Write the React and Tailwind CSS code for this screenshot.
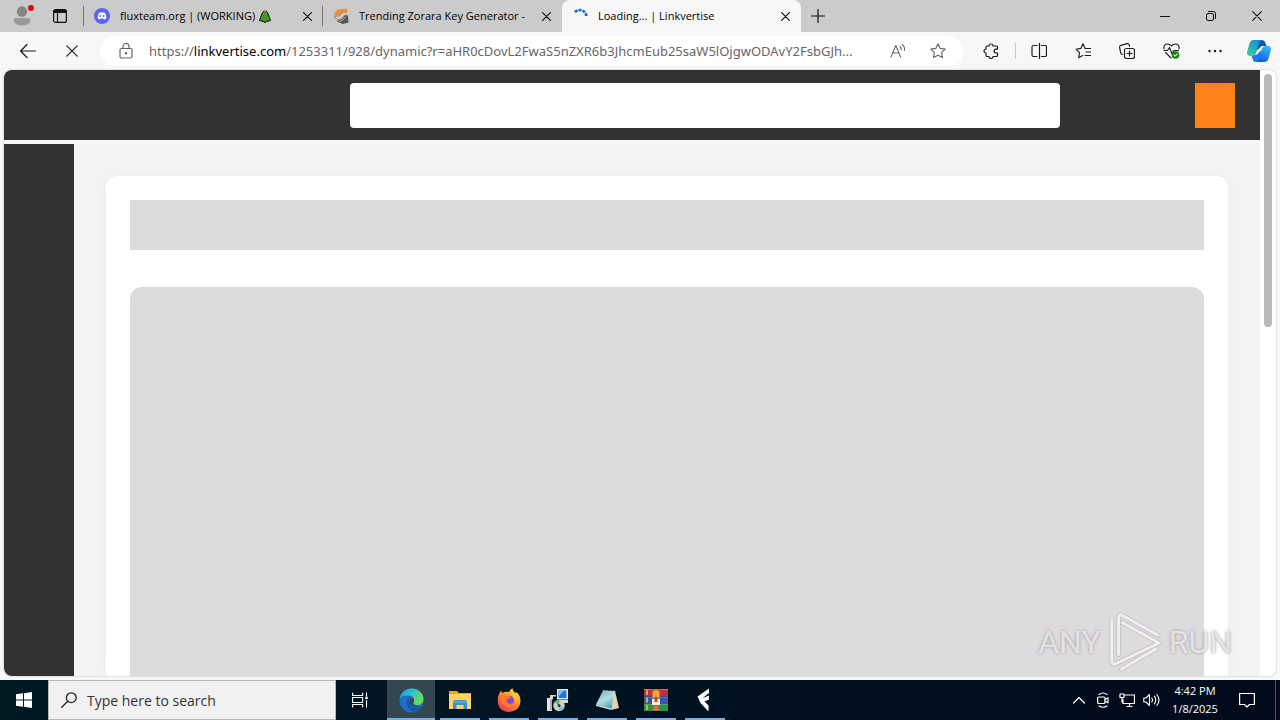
const ui = "font-['Open_Sans','Noto_Sans',sans-serif]";

function Icon({ className = "w-4 h-4", box = "0 0 16 16", children, sw = 1 }) {
  return (
    <svg className={className} viewBox={box} fill="none" stroke="currentColor" strokeWidth={sw} strokeLinecap="round" strokeLinejoin="round" aria-hidden="true">
      {children}
    </svg>
  );
}

function Cross({ className = "w-[9px] h-[9px]", sw = 1.2 }) {
  return (
    <Icon className={className} box="0 0 9 9" sw={sw}>
      <path d="M.6.6l7.8 7.8M8.4.6L.6 8.4" />
    </Icon>
  );
}

function Discord() {
  return (
    <svg className="w-4 h-4" viewBox="0 0 16 16" aria-hidden="true">
      <circle cx="8" cy="8" r="8" fill="#5865f2" />
      <path d="M5.2 4.8Q8 3.9 10.8 4.8Q12.5 7.3 12.4 10.2Q11.3 11.1 10 11.4L9.4 10.5H6.6L6 11.4Q4.7 11.1 3.6 10.2Q3.5 7.3 5.2 4.8Z" fill="#fff" />
      <circle cx="6.3" cy="8.1" r="1" fill="#5865f2" />
      <circle cx="9.7" cy="8.1" r="1" fill="#5865f2" />
    </svg>
  );
}

function Zorara() {
  return (
    <svg className="w-4 h-4" viewBox="0 0 16 16" aria-hidden="true">
      <path d="M1 5L5 1.500 13.500.5 14.500 4 9 7 3 8.500z" fill="#f58a32" />
      <path d="M.5 7l4 1L9 4l5 .5-5 5-3 3-5-2z" fill="#a89c94" />
      <path d="M3.500 13L9 11l3-4 3 .5.5 7-6 1.500z" fill="#57534f" />
      <path d="M3 9.500l3 .5 6-5" stroke="#f3e4d8" strokeWidth="1.200" fill="none" />
      <path d="M6 13.500l4-1.500 3-3.500" stroke="#c8c2bd" strokeWidth=".8" fill="none" />
    </svg>
  );
}

function Spinner() {
  return (
    <svg className="w-4 h-4" viewBox="0 0 16 16" fill="none" strokeWidth="2.6" aria-hidden="true">
      <path d="M3 4.2A6.500 6.500 0 0 1 14.300 8" stroke="#1668b0" strokeDasharray="3 1" />
    </svg>
  );
}

function Tree() {
  return (
    <svg className="w-3 h-3.5 shrink-0" viewBox="0 0 12 14" role="img" aria-label="Christmas tree">
      <path d="M6 1L8.500 3.500 9.500 6 10.500 8.500 11.500 11.500 6 13 .5 11.500 1.500 8.500 2.500 6 3.500 3.500z" fill="#35a028" stroke="#111" strokeWidth="1" />
      <path d="M4.8 12h2.4v2H4.8z" fill="#704020" />
      <circle cx="6" cy="1.3" r="1" fill="#e7b72c" />
      <path d="M5 5h1v1H5zM7 8h1v1H7zM4 9h1v1H4z" fill="#e44b35" />
    </svg>
  );
}

function Tab({ icon, title, extra, active, divider }) {
  return (
    <div className={"relative flex h-full w-[239px] items-center pl-2.5 pr-[11px] " + (active ? "rounded-t-lg bg-[#f7f7f7]" : "")}>
      <button role="tab" aria-selected={active} className="flex min-w-0 flex-1 items-center gap-2.5 text-left">
        <span className="shrink-0">{icon}</span>
        <span className="overflow-hidden whitespace-nowrap text-[11px] leading-4 text-black">{title}</span>
        {extra && <span className="-ml-1.5">{extra}</span>}
      </button>
      <button aria-label={"Close " + title} className="ml-3"><Cross /></button>
      {divider && <span className="absolute right-0 top-1.5 h-5 w-px bg-[#777]" />}
    </div>
  );
}

function TabStrip() {
  return (
    <header className="flex h-8 shrink-0 items-stretch bg-[#cbcbcb] text-[#111]">
      <button aria-label="Profile" className="relative flex w-11 items-center justify-center">
        <svg className="w-5 h-5" viewBox="0 0 20 20" aria-hidden="true">
          <circle cx="10" cy="5.5" r="5.2" fill="#858585" />
          <path d="M1.500 14.500Q1.500 12 4 12H16Q18.500 12 18.500 14.500Q17 19.500 10 19.500Q3 19.500 1.500 14.500Z" fill="#999" />
        </svg>
        <span className="absolute left-7 top-[5px] h-1.5 w-1.5 rounded-full bg-[#e3000b]" />
      </button>
      <button aria-label="Tab actions" className="flex w-8 items-center justify-center">
        <Icon className="w-3.5 h-3.5" box="0 0 14 14" sw={1.2}>
          <rect x=".6" y=".6" width="12.800" height="12.800" rx="2" />
          <path d="M1 2.400h12" strokeWidth="3" />
          <path d="M4.500 4v9" />
        </Icon>
      </button>
      <div className="flex w-2 items-center justify-end"><span className="h-5 w-px bg-[#777]" /></div>
      <div role="tablist" aria-label="Tabs" className="flex">
        <Tab icon={<Discord />} title="fluxteam.org | (WORKING)" extra={<Tree />} divider />
        <Tab icon={<Zorara />} title="Trending Zorara Key Generator -" />
        <Tab icon={<Spinner />} title="Loading... | Linkvertise" active />
      </div>
      <button aria-label="New tab" className="flex w-[34px] items-center justify-center">
        <Icon className="w-3.5 h-3.5" box="0 0 14 14" sw={1.2}><path d="M7 .5v13M.5 7h13" /></Icon>
      </button>
      <div className="ml-auto flex">
        <button aria-label="Minimize" className="flex w-[46px] items-center justify-center">
          <Icon className="w-2.5 h-2.5" box="0 0 10 10"><path d="M0 5.500h10" /></Icon>
        </button>
        <button aria-label="Restore" className="flex w-[46px] items-center justify-center">
          <Icon className="w-2.5 h-2.5" box="0 0 10 10">
            <rect x=".5" y="2.500" width="7" height="7" rx="1.500" />
            <path d="M2.500.5H7.500Q9.500.5 9.500 2.500V7.500" />
          </Icon>
        </button>
        <button aria-label="Close window" className="flex w-[46px] items-center justify-center"><Cross className="w-2.5 h-2.5" sw={1} /></button>
      </div>
    </header>
  );
}

function ToolButton({ label, children }) {
  return <button aria-label={label} className="flex h-8 w-11 shrink-0 items-center justify-center">{children}</button>;
}

function Toolbar() {
  return (
    <div className="flex h-[38px] shrink-0 items-center bg-[#f7f7f7] pl-1.5 text-[#1a1a1a]">
      <ToolButton label="Back">
        <Icon sw={1.200}><path d="M15.500 8H.8M7 1.500L.6 8 7 14.500" /></Icon>
      </ToolButton>
      <ToolButton label="Stop"><Cross className="w-3 h-3" sw={0.900} /></ToolButton>
      <form className="mx-1.5 flex h-[30px] min-w-0 flex-1 items-center rounded-full bg-white pl-[18px] text-[#666]">
        <button type="button" aria-label="Site information" className="mr-[15px]">
          <Icon sw={1.200}>
            <rect x="2" y="5.500" width="12" height="9.500" rx="1.500" />
            <path d="M5 5.500V3.500a3 3 0 0 1 6 0v2" />
            <circle cx="8" cy="10.300" r=".6" fill="currentColor" />
          </Icon>
        </button>
        <p aria-label="Address" className="min-w-0 flex-1 overflow-hidden whitespace-nowrap font-['Noto_Sans',sans-serif] text-[13px] leading-5">
          https://<span className="text-black">linkvertise.com</span>/1253311/928/dynamic?r=aHR0cDovL2FwaS5nZXR6b3JhcmEub25saW5lOjgwODAvY2FsbGJh...
        </p>
        <button type="button" aria-label="Read aloud" className="flex w-10 items-center justify-center">
          <Icon className="w-4 h-4" sw={1.100}>
            <path d="M1 14L5.800 2.500 10.600 14M2.700 10h6.200" />
            <path d="M10 3.500q1.500 1.500 1.200 3.500M12.200 1.500q3 2.500 2.200 6" />
          </Icon>
        </button>
        <button type="button" aria-label="Add to favorites" className="mr-[5px] flex w-10 items-center justify-center">
          <Icon sw={1.100}><path d="M8 .8l2.200 4.600 5 .7-3.600 3.500.9 5L8 12.200l-4.500 2.400.9-5L.8 6.100l5-.7z" /></Icon>
        </button>
      </form>
      <ToolButton label="Extensions">
        <Icon sw={1.200}>
          <path d="M4 3H6a2 2 0 0 1 4 0H13.500Q14.500 3 14.500 4V6.200H13a1.900 1.900 0 0 0 0 3.800H14.500V12.500Q14.500 13.500 13.500 13.500H10a2 2 0 0 1-4 0H4Q3 13.500 3 12.500V10a2 2 0 0 1 0-4V4Q3 3 4 3z" />
        </Icon>
      </ToolButton>
      <div className="flex w-1 justify-center"><span className="h-4 w-px bg-[#c9c9c9]" /></div>
      <ToolButton label="Split screen">
        <Icon sw={1.200}><path d="M6 2.500H2.500Q1 2.500 1 4v8Q1 13.500 2.500 13.500H6M10.500 2.500h3.500Q15.500 2.500 15.500 4v8q0 1.500-1.500 1.500H10.500M8.500.5v15" /></Icon>
      </ToolButton>
      <ToolButton label="Favorites">
        <Icon sw={1.100}><path d="M10 5.400L8 .8 5.800 5.400 1 6.200 4.500 9.700l-.8 5 4-2.100M10 5.500h6M11 9h5M10 12.500h6" /></Icon>
      </ToolButton>
      <ToolButton label="Collections">
        <Icon sw={1.200}>
          <rect x="5.500" y="5.500" width="10" height="10" rx="2" />
          <path d="M10.500 8v5M8 10.500h5M3.400 11.500Q2 11 1.700 9.800L.6 4.400Q.4 2.800 2 2.300L8 .7q1.700-.4 2.300 1.200l.3 1.400" />
        </Icon>
      </ToolButton>
      <ToolButton label="Browser essentials">
        <Icon className="w-[17px] h-4" box="0 0 17 16" sw={1.100}>
          <path d="M1 6Q.3 2.500 3 1.300 6 .2 8.500 3 11 .2 14 1.300 16.700 2.500 16 6M1 7.500h3.500L6.500 4.500l2.300 6L10.800 7.500H15.500M2.500 9.500L8 15" />
          <circle cx="12.500" cy="12" r="3.800" fill="#168015" stroke="none" />
          <path d="M11 12l1.100 1.200L14.200 11" stroke="#d6ffd6" />
        </Icon>
      </ToolButton>
      <ToolButton label="Settings and more">
        <svg className="w-3.5 h-1" viewBox="0 0 14 4" fill="currentColor" aria-hidden="true"><circle cx="1.500" cy="2" r="1.200" /><circle cx="7" cy="2" r="1.200" /><circle cx="12.500" cy="2" r="1.200" /></svg>
      </ToolButton>
      <button aria-label="Copilot" className="flex w-[43px] items-center justify-center">
        <svg className="w-6 h-6" viewBox="0 0 24 24" aria-hidden="true">
          <defs>
            <linearGradient id="cpA" x1=".8" y1="0" x2=".3" y2="1"><stop offset="0" stopColor="#1688d8" /><stop offset=".45" stopColor="#1fa8c8" /><stop offset="1" stopColor="#42c98a" /></linearGradient>
            <linearGradient id="cpB" x1=".7" y1="0" x2=".3" y2="1"><stop offset="0" stopColor="#35b9f5" /><stop offset="1" stopColor="#1558e6" /></linearGradient>
          </defs>
          <path d="M11 1h4q2.500 0 3.300 2.500L19.500 7H16q-2.500 0-3.200 2L9 12z" fill="#1257a8" />
          <path d="M13 23H9q-2.500 0-3.300-2.500L4.500 16H8q2.500 0 3.200-2L15 11z" fill="#1b79e8" />
          <path d="M6.500 1H15Q13 1.500 12.200 4L9.300 13.500Q8.300 17 5 17H3Q-.9 17 .2 12.500L2.500 4.500Q3.500 1 6.500 1z" fill="url(#cpA)" />
          <path d="M17.500 23H9q2-.5 2.800-3L14.700 10.500Q15.700 7 19 7h2q3.900 0 2.800 4.500L21.500 19.500Q20.500 23 17.500 23z" fill="url(#cpB)" />
        </svg>
      </button>
    </div>
  );
}

function Watermark() {
  return (
    <div aria-label="ANY RUN" className="absolute bottom-[46px] right-12 flex items-center font-['Roboto',sans-serif] text-[32px] leading-[64px] text-white/70 [text-shadow:0_0_3px_#8f8d8f]">
      <span>ANY</span>
      <svg className="mx-1.5 h-16 w-[56px]" viewBox="0 0 58 64" fill="none" strokeLinecap="round" strokeLinejoin="round" aria-hidden="true">
        <g stroke="#b7b4b7" strokeOpacity=".6" strokeWidth="5">
          <path d="M12 45V8Q12 2 17 5L53 25M5 9V51Q5 57 10 54L54 33L16 12M15 60L51 39" />
        </g>
        <g stroke="#f1eff1" strokeWidth="3">
          <path d="M12 45V8Q12 2 17 5L53 25M5 9V51Q5 57 10 54L54 33L16 12M15 60L51 39" />
        </g>
      </svg>
      <span>RUN</span>
    </div>
  );
}

function Page() {
  return (
    <div className="flex min-h-0 flex-1 bg-[#f7f7f7] px-1 pb-1">
      <div className="flex min-w-0 flex-1 overflow-hidden rounded-lg bg-white shadow-[0_0_2px_#aaa]">
        <main className="flex min-w-0 flex-1 flex-col bg-[#f4f4f4]">
          <div className="flex h-[70px] shrink-0 items-center bg-[#323232] pl-[346px] pr-[25px]">
            <input aria-label="Search" className="h-[45px] min-w-0 flex-1 rounded bg-white px-3 outline-none" />
            <button aria-label="Menu" className="ml-[135px] h-[45px] w-10 shrink-0 bg-[#ff8216]" />
          </div>
          <div className="flex min-h-0 flex-1">
            <nav aria-label="Sidebar" className="mt-1 w-[70px] shrink-0 bg-[#323232]" />
            <section className="mx-8 mt-9 flex min-w-0 flex-1 flex-col gap-[37px] rounded-t-xl bg-white px-6 pt-6 shadow-[0_0_20px_rgba(0,0,0,0.04)]">
              <div className="h-[50px] shrink-0 bg-[#dedbdf]" />
              <div className="flex-1 rounded-t-xl bg-[#dedbdf]" />
            </section>
          </div>
        </main>
        <div className="flex w-4 shrink-0 justify-center bg-white py-1">
          <div className="h-[253px] w-2 rounded-full bg-[#b9b9bd]" />
        </div>
      </div>
    </div>
  );
}

function EdgeLogo() {
  return (
    <svg className="h-[25px] w-[25px]" viewBox="0 0 25 25" aria-hidden="true">
      <defs>
        <linearGradient id="edA" x1="0" y1="0" x2="1" y2=".4"><stop offset="0" stopColor="#2494da" /><stop offset=".5" stopColor="#2ac0cf" /><stop offset="1" stopColor="#67df55" /></linearGradient>
      </defs>
      <circle cx="12.500" cy="12.500" r="12" fill="#1b6fc4" />
      <path d="M.6 11.500C2 4 7 .5 12.500.5 19 .5 24.500 5 24.500 11c0 3.500-2.500 6-6 6-3 0-5-1-4.300-2 2-2.800.6-7-4-7.500C5.500 7 2 8.500.6 11.500z" fill="url(#edA)" />
      <path d="M9 10c-3 5.500 0 14 8 14 3-.8 5-2.500 6.400-5C17 22 10.500 18.500 11 14z" fill="#1656a5" />
      <path d="M14.200 15c2-2.800.3-5.500-2.200-5.300-2 1-2 4.500.5 7.300 3 3 8 3 11.200 1-3 1.200-9.500 0-9.500-3z" fill="#36474d" />
    </svg>
  );
}

function Folder() {
  return (
    <svg className="h-[22px] w-6" viewBox="0 0 24 22" aria-hidden="true">
      <path d="M1 2h8l2 2h12v16H1z" fill="#e9a32b" />
      <path d="M1 5h22v15H1z" fill="#fbd36a" />
      <path d="M5 20v-7q0-2 2-2h10q2 0 2 2v7h-3.500v-4h-7v4z" fill="#398fd0" />
      <path d="M5 13h14" stroke="#6dbbe9" strokeWidth="1" />
    </svg>
  );
}

function Firefox() {
  return (
    <svg className="h-6 w-6" viewBox="0 0 24 24" aria-hidden="true">
      <defs>
        <linearGradient id="ffA" x1=".9" y1="0" x2=".2" y2="1"><stop offset="0" stopColor="#fff04a" /><stop offset=".45" stopColor="#ff9624" /><stop offset="1" stopColor="#f02a60" /></linearGradient>
      </defs>
      <path d="M2.500 5q1-2 2-2.500 0 2 1 2.500 2-1.500 4-1.300L12 4Q13.500 1 15.500.3 15.500 2.800 18 4.500 19 5.500 19.500 4q4.300 4 4 9.500Q22.500 23.500 12 24 1 23.500.7 12.500.5 8 2.500 5z" fill="url(#ffA)" />
      <circle cx="12" cy="12.800" r="5" fill="#8046d8" />
      <path d="M4 9q4-3 7-1l3 1q-1 2-4 2-1.500 3 1.500 4.500 3 1 5-1-1 5-6 4.500Q4 18 4 9z" fill="#ff7826" />
      <path d="M15 7q4 2 3.500 7 2-3 1-7-2-2-4-4-1 2-.5 4z" fill="#ffc834" />
    </svg>
  );
}

function Installer() {
  return (
    <svg className="h-6 w-6" viewBox="0 0 24 24" aria-hidden="true">
      <path d="M11 1h11v10.500H11z" fill="#e4ecf2" /><path d="M12.500 2.500h8v7.500h-8z" fill="#1a78dc" /><path d="M13 3h4.500L13 8z" fill="#70c8ff" />
      <path d="M14 12h8v3H12z" fill="#d8dcdf" />
      <path d="M4 7h6v1.500H7v3H4z" fill="#d4d4d4" /><path d="M1 10h5v13H1z" fill="#e8e4ea" /><path d="M4 11h2v11H4z" fill="#b5a9b5" />
      <circle cx="13" cy="17.500" r="5.700" fill="#cbd3cb" /><path d="M13 17.500L8.500 14q2-2.500 5-2.200z" fill="#6eac64" /><path d="M13 17.500l5 2.500q-2 3.200-5 3z" fill="#8dbfd0" />
      <circle cx="13" cy="17.500" r="1.500" fill="#26414a" />
    </svg>
  );
}

function Notebook() {
  return (
    <svg className="h-6 w-6" viewBox="0 0 24 24" aria-hidden="true">
      <defs><linearGradient id="nbA" x1=".2" y1="0" x2=".7" y2="1"><stop offset="0" stopColor="#6fb0ba" /><stop offset=".5" stopColor="#b5dfe2" /><stop offset="1" stopColor="#4b9dac" /></linearGradient></defs>
      <path d="M18 3L20 3 24 20 16 22z" fill="#e0d3b4" />
      <path d="M8 2.500L19 3 16.500 21 1 16.500z" fill="url(#nbA)" />
      <path d="M1 16.500l15.500 4v1.500L1 18z" fill="#c8e3e5" />
      <path d="M8.500 2.500h1M11.500 2.500h1M14.500 3h1M17.500 3h1" stroke="#c9d4d5" />
    </svg>
  );
}

function Archive() {
  return (
    <svg className="h-6 w-6" viewBox="0 0 24 24" aria-hidden="true">
      <path d="M0 1h24v7H0z" fill="#c02f38" /><path d="M0 8.500h24v6.500H0z" fill="#3653bc" /><path d="M0 15.500h24v7.500H0z" fill="#289448" />
      <path d="M0 1.500h24M0 9h24M0 16h24" stroke="#fff" strokeOpacity=".3" />
      <path d="M3 2v5M3 9.500v5M3 17v5" stroke="#d9b94a" strokeWidth="1.800" />
      <path d="M8.500 1h7v22h-7z" fill="#a8602a" /><path d="M8.500 4Q12-1 15.500 4v6h-7z" fill="#f0a23f" />
      <path d="M8 11h8v6H8z" fill="#f2eee1" /><path d="M10.500 9h3v5h-3z" fill="#a4581f" /><path d="M9.500 19h5M9.500 21.500h5" stroke="#f3a252" />
    </svg>
  );
}

function FluxMark() {
  return (
    <svg className="h-6 w-6" viewBox="0 0 24 24" fill="#fff" aria-hidden="true">
      <path d="M16 .5L4.500 8.500 7.500 15 15.500 23.500V17.500L11.500 13.500 16 11.500V7.500L9.500 10.300 16 5z" />
    </svg>
  );
}

const apps = [
  ["Microsoft Edge", EdgeLogo],
  ["File Explorer", Folder],
  ["Firefox", Firefox],
  ["Installer", Installer],
  ["Notepad", Notebook],
  ["WinRAR", Archive],
  ["Flux", FluxMark],
];

function Taskbar() {
  return (
    <footer className="flex h-10 shrink-0 items-stretch bg-linear-to-r from-[#001a24] to-[#000a1b] text-white">
      <button aria-label="Start" className="flex w-12 items-center justify-center">
        <svg className="h-4 w-4" viewBox="0 0 16 16" fill="#fff" aria-hidden="true"><path d="M0 2.300L7 1.300V7.500H0zM8 1.200L16 0v7.500H8zM0 8.500h7v6.200L0 13.700zM8 8.500h8V16L8 14.800z" /></svg>
      </button>
      <label className="flex w-72 items-center gap-2.5 border border-[#b8b8b8] bg-[#f1f1f1] pl-3 text-[#222]">
        <Icon className="h-4 w-4 shrink-0" sw={1.300}><circle cx="10.300" cy="5.700" r="4.900" /><path d="M6.800 9.200L.7 15.300" /></Icon>
        <input aria-label="Search Windows" placeholder="Type here to search" className="min-w-0 flex-1 bg-transparent text-[14px] outline-none placeholder:text-[#333]" />
      </label>
      <button aria-label="Task view" className="mr-[3px] flex w-12 items-center justify-center">
        <Icon className="h-4 w-4" sw={1.100}>
          <path d="M.6 1v2.500h10V1M.6 15v-2.500h10V15M.6 5.500h10v5H.6zM14.500 1v3M14.500 8.500V15" />
          <path d="M13.300 4.700h2.400v2.400h-2.400z" fill="currentColor" stroke="none" />
        </Icon>
      </button>
      <div className="flex gap-px">
        {apps.map(([name, Logo], i) => (
          <button key={name} aria-label={name} className={"flex w-12 flex-col items-center " + (i === 0 ? "bg-[#34474e]" : "")}>
            <span className="flex flex-1 items-center pt-0.5"><Logo /></span>
            <span className={"h-0.5 bg-[#76b0e4] " + (i === 0 ? "w-12" : "w-10")} />
          </button>
        ))}
      </div>
      <div className="ml-auto flex items-stretch">
        <button aria-label="Show hidden icons" className="flex w-6 items-center justify-center">
          <Icon className="h-3 w-3" box="0 0 12 12" sw={1.200}><path d="M.6 9L6 3.500 11.400 9" /></Icon>
        </button>
        <button aria-label="Meet now" className="flex w-6 items-center justify-center">
          <Icon className="h-4 w-4" sw={1.200}><rect x="2.600" y="5" width="7.400" height="6.500" rx="1" /><path d="M10 7.500l3-1.700v5L10 9.300M4 2.500q4-3 8 0M4 14q4 2.500 8 0" /></Icon>
        </button>
        <button aria-label="Network" className="flex w-6 items-center justify-center">
          <Icon className="h-4 w-4" sw={1.200}><path d="M6 3h9.500v8.500H4V7.500M8 14.500h5M10.500 11.500v3M1 2h4v3.500H1zM3 5.500V10" /></Icon>
        </button>
        <button aria-label="Volume" className="flex w-6 items-center justify-center">
          <Icon className="h-4 w-[17px]" box="0 0 17 16" sw={1.100}><path d="M.8 6H3l3.500-3.500v11L3 10H.8zM8.800 6q1.500 2 0 4M11.300 4.200q3 3.800 0 7.600M13.800 2.500q4.500 5.500 0 11" /></Icon>
        </button>
        <button aria-label="Clock" className="w-16 whitespace-nowrap text-center text-[11px] leading-[18px]">
          <span className="block">4:42 PM</span>
          <span className="block">1/8/2025</span>
        </button>
        <button aria-label="Notifications" className="flex w-10 items-center justify-center">
          <Icon className="h-4 w-4" sw={1.200}><path d="M.6 1.500h14.800v11H10.500L8 15l-2.500-2.500H.6z" /></Icon>
        </button>
        <button aria-label="Show desktop" className="flex w-[13px] pl-2"><span className="w-px self-stretch bg-[#4a5260]" /></button>
      </div>
    </footer>
  );
}

export default function App() {
  return (
    <div className={"relative flex h-screen flex-col overflow-hidden bg-[#f7f7f7] " + ui}>
      <TabStrip />
      <Toolbar />
      <Page />
      <Taskbar />
      <Watermark />
    </div>
  );
}
